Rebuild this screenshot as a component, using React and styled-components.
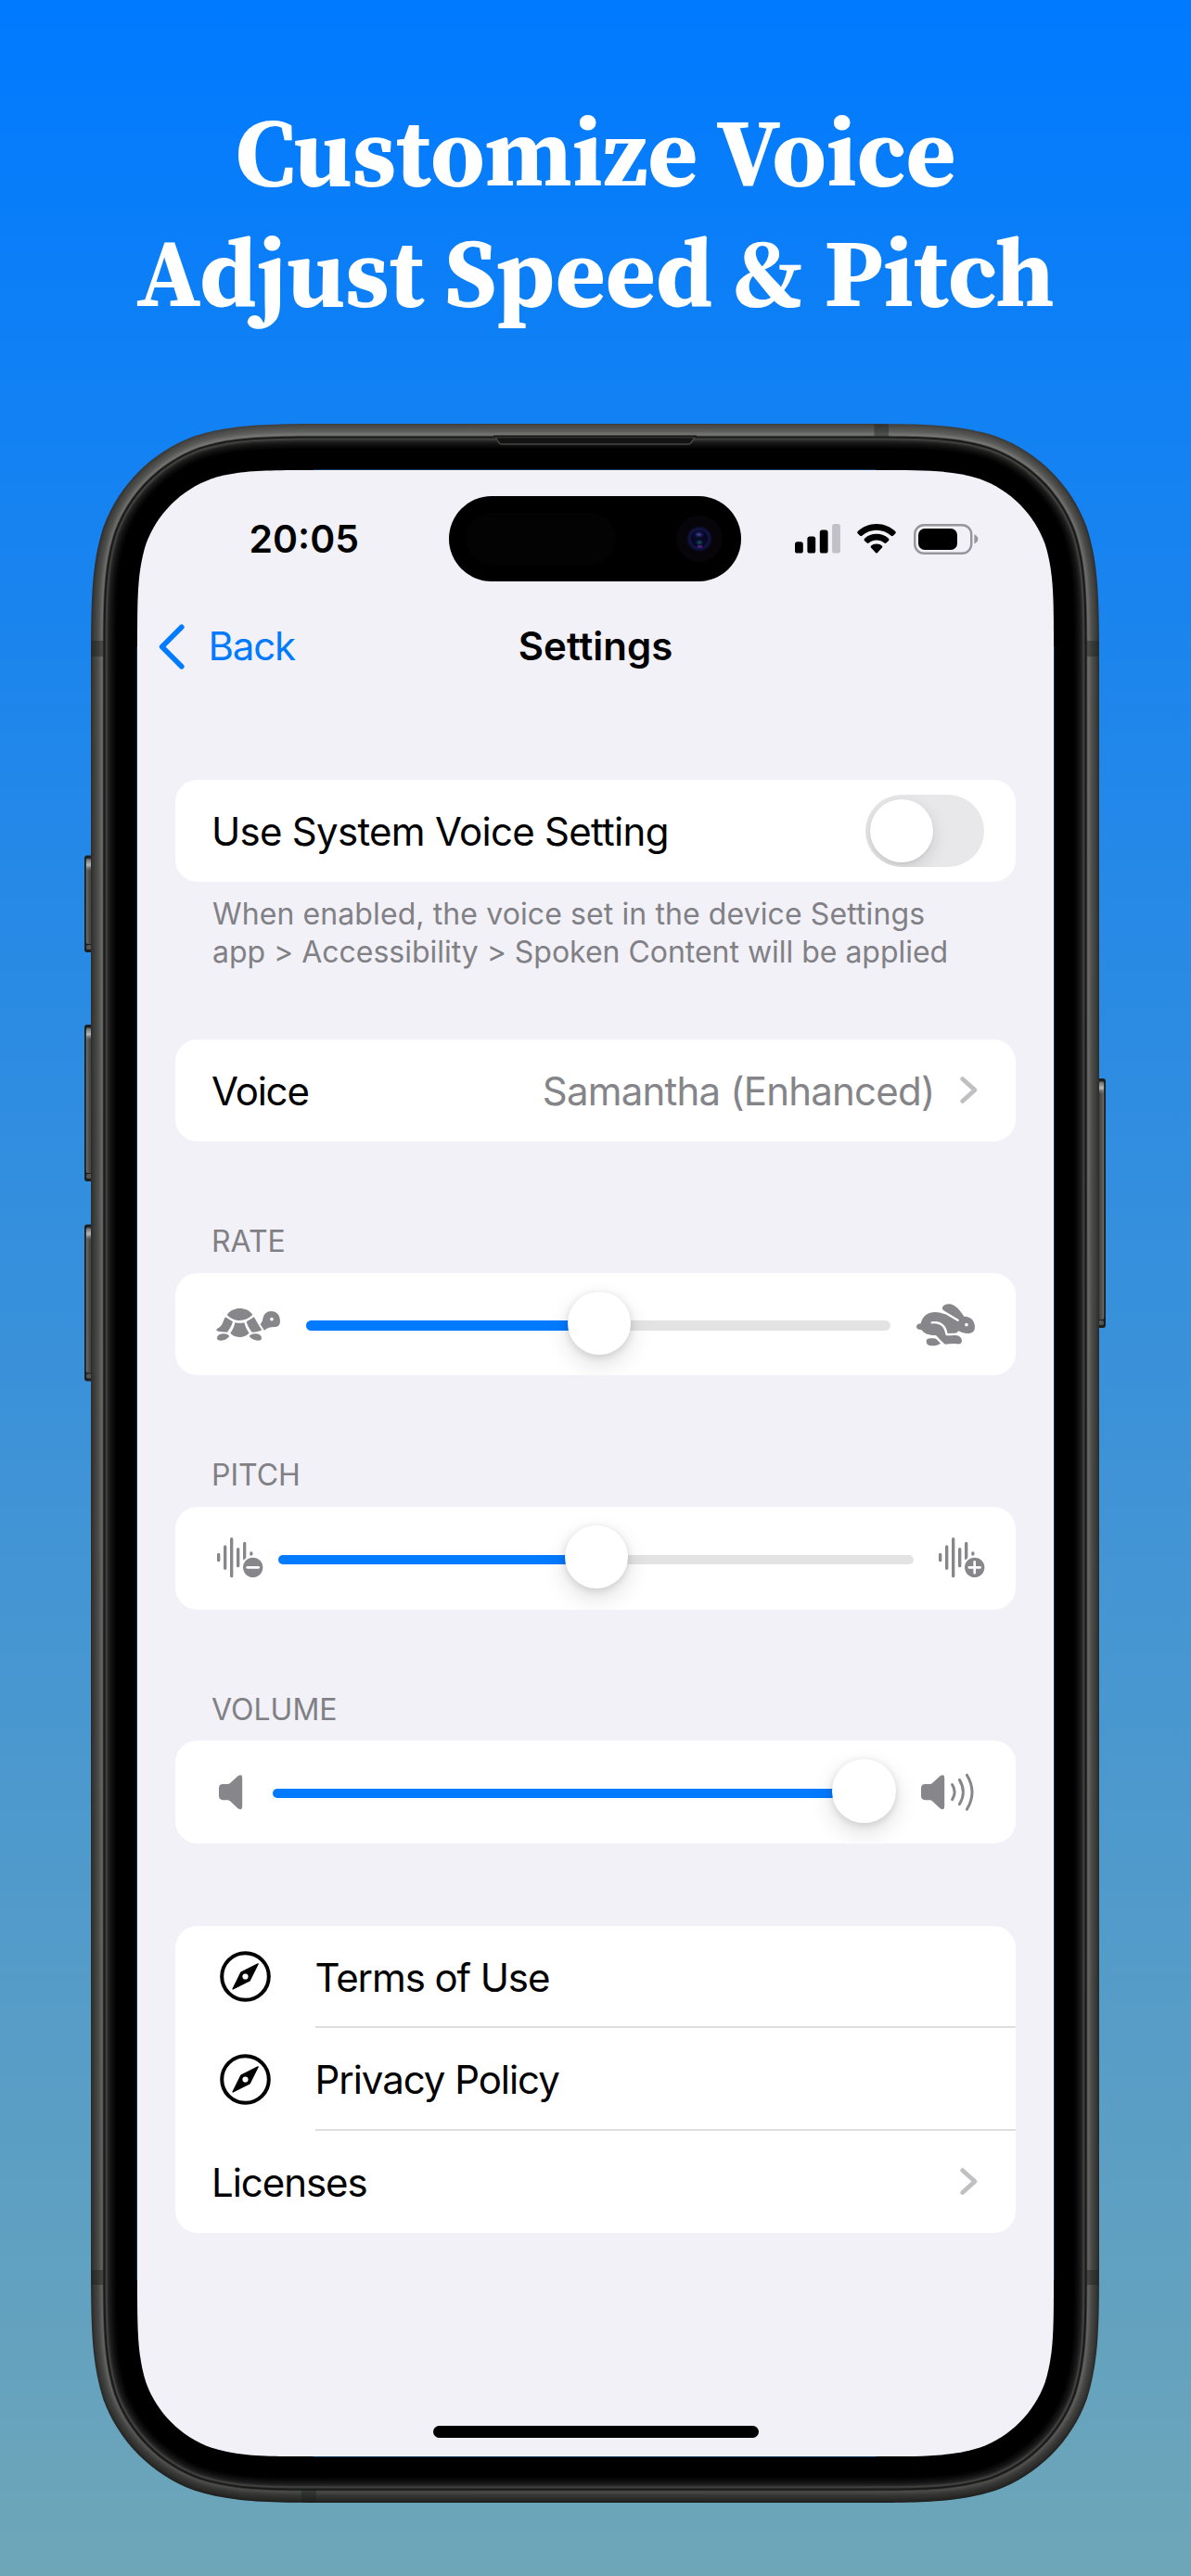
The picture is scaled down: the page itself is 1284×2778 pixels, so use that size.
import React from "react";
import styled, { createGlobalStyle, css } from "styled-components";

const PHONE = { w: 1087, h: 2242, r: 177 };
const SCREEN = { w: 988, h: 2142, r: 126 };

/* Rounded rectangle with continuous (iOS style) corners. */
function squircle(w, h, r, inset = 0) {
  const R = r - inset;
  const x0 = inset;
  const y0 = inset;
  const x1 = w - inset;
  const y1 = h - inset;
  const a = 1.52866 * R;
  const b = 1.08849 * R;
  const c = 0.86841 * R;
  const d = 0.63149 * R;
  const e = 0.07491 * R;
  const f = 0.37282 * R;
  const g = 0.16906 * R;
  return [
    `M${x0 + a} ${y0}`,
    `L${x1 - a} ${y0}`,
    `C${x1 - b} ${y0} ${x1 - c} ${y0} ${x1 - d} ${y0 + e}`,
    `C${x1 - f} ${y0 + g} ${x1 - g} ${y0 + f} ${x1 - e} ${y0 + d}`,
    `C${x1} ${y0 + c} ${x1} ${y0 + b} ${x1} ${y0 + a}`,
    `L${x1} ${y1 - a}`,
    `C${x1} ${y1 - b} ${x1} ${y1 - c} ${x1 - e} ${y1 - d}`,
    `C${x1 - g} ${y1 - f} ${x1 - f} ${y1 - g} ${x1 - d} ${y1 - e}`,
    `C${x1 - c} ${y1} ${x1 - b} ${y1} ${x1 - a} ${y1}`,
    `L${x0 + a} ${y1}`,
    `C${x0 + b} ${y1} ${x0 + c} ${y1} ${x0 + d} ${y1 - e}`,
    `C${x0 + f} ${y1 - g} ${x0 + g} ${y1 - f} ${x0 + e} ${y1 - d}`,
    `C${x0} ${y1 - c} ${x0} ${y1 - b} ${x0} ${y1 - a}`,
    `L${x0} ${y0 + a}`,
    `C${x0} ${y0 + b} ${x0} ${y0 + c} ${x0 + e} ${y0 + d}`,
    `C${x0 + g} ${y0 + f} ${x0 + f} ${y0 + g} ${x0 + d} ${y0 + e}`,
    `C${x0 + c} ${y0} ${x0 + b} ${y0} ${x0 + a} ${y0}Z`,
  ].join(" ");
}

const GlobalStyle = createGlobalStyle`
  * { box-sizing: border-box; }
  body { margin: 0; background: #6ea6b8; }
`;

const Page = styled.main`
  width: 1284px;
  height: 2778px;
  overflow: hidden;
  display: flex;
  flex-direction: column;
  align-items: center;
  background: linear-gradient(180deg, #007aff 0%, #6ea6b8 100%);
  font-family: Inter, "Liberation Sans", sans-serif;
  -webkit-font-smoothing: antialiased;
`;

const Headline = styled.h1`
  margin: 0;
  height: 457px;
  flex: none;
  padding-top: 99px;
  font-family: "Source Serif 4", "Source Serif Pro", "Liberation Serif", serif;
  font-weight: 700;
  font-size: 104px;
  line-height: 130px;
  text-align: center;
  white-space: nowrap;
  color: #fff;
`;

const Phone = styled.div`
  position: relative;
  flex: none;
  width: ${PHONE.w}px;
  height: ${PHONE.h}px;
  margin-right: 1px;
  padding: 50px 0 0 50px;
`;

const Chassis = styled.svg`
  position: absolute;
  left: -8px;
  top: 0;
`;

const Screen = styled.div`
  position: relative;
  width: ${SCREEN.w}px;
  height: ${SCREEN.h}px;
  display: flex;
  flex-direction: column;
  background: #f2f1f8;
  clip-path: path("${squircle(SCREEN.w, SCREEN.h, SCREEN.r)}");
`;

const StatusBar = styled.div`
  flex: none;
  height: 148px;
  display: grid;
  grid-template-columns: 336px 314.5px 1fr;
  align-items: center;
`;

const Clock = styled.span`
  padding-left: 120.5px;
  font-size: 41px;
  font-weight: 600;
  line-height: 50px;
  color: #000;
`;

const Island = styled.div`
  height: 92px;
  border-radius: 46px;
  background: #000;
  display: flex;
  align-items: center;
  justify-content: space-between;
  padding: 0 20px 0 18px;
`;

const IslandSensor = styled.div`
  width: 162px;
  height: 56px;
  border-radius: 28px;
  background: #030303;
`;

const StatusIcons = styled.div`
  display: flex;
  align-items: center;
  gap: 18.5px;
  padding-left: 58px;
`;

const NavBar = styled.div`
  flex: none;
  height: 85px;
  display: grid;
  grid-template-columns: 1fr auto 1fr;
  align-items: center;
  padding-bottom: 1px;
  line-height: 50px;
  font-size: 42px;
`;

const BackButton = styled.div`
  display: flex;
  align-items: center;
  gap: 25.5px;
  padding-left: 23px;
  color: #007aff;
  letter-spacing: -1.2px;
`;

const NavTitle = styled.span`
  font-weight: 600;
  color: #000;
`;

const List = styled.div`
  padding: 100.9px 40.6px 0 40.5px;
`;

const Section = styled.section`
  margin-bottom: ${(p) => p.$gap}px;
`;

const SectionHeader = styled.h2`
  margin: 0 0 13.8px;
  padding: 1px 0 0 39.5px;
  font-size: 32px;
  font-weight: 400;
  line-height: 40px;
  color: #808085;
`;

const SectionFooter = styled.p`
  margin: 15.2px 0 0;
  padding-left: 40.5px;
  font-size: 32px;
  line-height: 40.7px;
  white-space: nowrap;
  color: #808085;
`;

const FooterLine = styled.span`
  display: block;
  letter-spacing: ${(p) => p.$tracking}px;
`;

const Card = styled.div`
  border-radius: 24px;
  background: #fff;
  overflow: hidden;
`;

const Row = styled.div`
  height: 110.4px;
  display: flex;
  align-items: center;
  padding: 0 ${(p) => p.$right || 0}px 0 ${(p) => p.$left || 39.5}px;
  line-height: 50px;
`;

const DividedRow = styled.div`
  height: 110.5px;
  display: flex;
  align-items: center;
  padding-left: 48px;
`;

const DividedLabel = styled.div`
  flex: 1;
  align-self: stretch;
  display: flex;
  align-items: center;
  margin-left: 48px;
  padding-top: 2px;
  border-bottom: 2px solid #dededf;
`;

const Label = styled.span`
  padding-top: 2px;
  font-size: 42px;
  line-height: 50px;
  white-space: nowrap;
  color: ${(p) => p.$color || "#000"};
  letter-spacing: ${(p) => p.$tracking}px;
  ${(p) =>
    p.$push &&
    css`
      margin-left: auto;
      margin-right: 28px;
    `}
`;

const Disclosure = styled.span`
  margin-left: auto;
`;

const Switch = styled.div`
  width: 128px;
  height: 78px;
  margin-left: auto;
  padding: 5px;
  border-radius: 39px;
  background: #e8e8ea;
  overflow: hidden;
`;

const SwitchKnob = styled.div`
  width: 68px;
  height: 68px;
  border-radius: 50%;
  background: #fff;
  box-shadow: 0 6px 18px rgba(0, 0, 0, 0.13), 0 2px 3px rgba(0, 0, 0, 0.05);
`;

const Track = styled.div`
  position: relative;
  flex: 1;
  height: 10.6px;
  margin: 3px ${(p) => p.$after}px 0 ${(p) => p.$before}px;
  border-radius: 6px;
  background: #e3e3e4;
`;

const TrackFill = styled.div`
  height: 100%;
  border-radius: 6px;
  background: #007aff;
`;

const Thumb = styled.div`
  position: absolute;
  top: -31.6px;
  width: 68.4px;
  height: 68.4px;
  margin-left: -34.2px;
  border-radius: 50%;
  background: #fff;
  box-shadow: 0 10px 26px rgba(0, 0, 0, 0.13), 0 2px 9px rgba(0, 0, 0, 0.13);
`;

const HomeIndicator = styled.div`
  width: 351px;
  height: 13px;
  margin: auto auto 20px;
  border-radius: 7px;
  background: #000;
`;

const Icon = styled.svg`
  display: block;
  flex: none;
  overflow: visible;
`;

const BAND = [
  "#2f2f2e", "#353534", "#3a3b39", "#3f403e", "#434442", "#474846", "#4b4c4a",
  "#50514f", "#575856", "#5f605e", "#686967", "#6e6f6d", "#4e4f4d",
];
const RIM = [
  "#191a19", "#1b1c1b", "#3c3d3b", "#424341", "#2a2a2a", "#232323", "#1b1b1b",
  "#161616", "#121212", "#0e0e0e", "#0a0a0a", "#070707", "#040404", "#000",
];

function SideButton({ x, y, h, flip }) {
  return (
    <g transform={flip ? `translate(${x + 9} ${y}) scale(-1 1)` : `translate(${x} ${y})`}>
      <rect width="12" height={h} rx="3" fill="#1d1e1e" />
      <rect x="1.8" y="3" width="9" height={h - 12} rx="2" fill="url(#button)" />
      <rect x="2" y="4" width="6" height="13" rx="3" fill="url(#shine)" />
      <rect x="2" y={h - 8} width="6" height="5" rx="2" fill="#545555" />
    </g>
  );
}

function PhoneChassis() {
  const { w, h, r } = PHONE;
  return (
    <Chassis width={w + 16} height={h} viewBox={`-8 0 ${w + 16} ${h}`}>
      <defs>
        <linearGradient id="shade" x1="0" y1="0" x2="0" y2="1">
          <stop offset="0" stopColor="#fff" stopOpacity="0.08" />
          <stop offset="0.08" stopColor="#000" stopOpacity="0" />
          <stop offset="0.94" stopColor="#000" stopOpacity="0.1" />
          <stop offset="1" stopColor="#000" stopOpacity="0.34" />
        </linearGradient>
        <linearGradient id="button" x1="0" y1="0" x2="1" y2="0">
          <stop offset="0" stopColor="#6c6e6d" />
          <stop offset="0.35" stopColor="#4c4d4c" />
          <stop offset="1" stopColor="#2e2f2e" />
        </linearGradient>
        <linearGradient id="shine" x1="0" y1="0" x2="0" y2="1">
          <stop offset="0" stopColor="#6d7174" />
          <stop offset="0.5" stopColor="#b3b8bc" />
          <stop offset="1" stopColor="#666" stopOpacity="0" />
        </linearGradient>
      </defs>
      <SideButton x={-7} y={465.5} h={104.5} />
      <SideButton x={-7} y={648} h={169} />
      <SideButton x={-7} y={863.5} h={169} />
      <SideButton x={w - 2} y={706} h={269} flip />
      {BAND.map((color, i) => (
        <path key={color + i} d={squircle(w, h, r, i * 1.05)} fill={color} />
      ))}
      <path d={squircle(w, h, r)} fill="url(#shade)" />
      <g fill="#1d1e1d" fillOpacity="0.42">
        <rect x="844.5" y="0.5" width="15.5" height="13" />
        <rect x="227" y={h - 14} width="16" height="13.5" />
        <rect x="0.5" y="234" width="13" height="17" />
        <rect x={w - 13.5} y="234" width="13" height="17" />
        <rect x="0.5" y="1991" width="13" height="16" />
        <rect x={w - 13.5} y="1991" width="13" height="16" />
      </g>
      {RIM.map((color, i) => (
        <path
          key={color + i}
          d={squircle(w, h, r, 13.4 + i * 1.05)}
          fill={color}
        />
      ))}
      <path d="M436 14.5 L440 20.5 Q441 22 443 22 H644 Q646 22 647 20.5 L651 14.5Z" fill="#121312" stroke="#454644" strokeWidth="1.4" />
      <path d="M434 13.6 H653" stroke="#191a19" strokeWidth="2" />
      <path
        d={`M240 49.5 H${w - 240} M49.5 240 V${h - 240} M${w - 48.5} 240 V${h - 240} M240 ${h - 49.5} H${w - 240}`}
        stroke="#1462b4"
        strokeOpacity="0.5"
        fill="none"
      />
    </Chassis>
  );
}

const CameraIcon = () => (
  <Icon width="50" height="50" viewBox="-25 -25 50 50">
    <defs>
      <radialGradient id="lens">
        <stop offset="0" stopColor="#1a1d5c" />
        <stop offset="0.55" stopColor="#0b0d33" />
        <stop offset="0.8" stopColor="#101544" />
        <stop offset="1" stopColor="#090a1c" />
      </radialGradient>
      <radialGradient id="glintTop">
        <stop offset="0" stopColor="#4a4fa8" />
        <stop offset="1" stopColor="#1a1d5c" stopOpacity="0" />
      </radialGradient>
      <radialGradient id="glintBottom">
        <stop offset="0" stopColor="#10616b" />
        <stop offset="1" stopColor="#0d2a48" stopOpacity="0" />
      </radialGradient>
    </defs>
    <circle r="25" fill="#07040a" />
    <circle r="13.5" fill="url(#lens)" />
    <circle r="9" fill="#070824" />
    <ellipse cx="-0.5" cy="-4.5" rx="6" ry="4" fill="url(#glintTop)" />
    <ellipse cx="0" cy="4" rx="5" ry="4" fill="url(#glintBottom)" />
    <ellipse cx="0.5" cy="8.5" rx="3" ry="1.4" fill="#4c1d7a" />
  </Icon>
);

const SignalIcon = () => (
  <Icon width="49" height="32" viewBox="0 0 49 32">
    <rect x="0" y="19.3" width="8.8" height="12.2" rx="2.6" />
    <rect x="13.4" y="13.4" width="8.8" height="18.1" rx="2.6" />
    <rect x="26.8" y="6.4" width="8.8" height="25.1" rx="2.6" />
    <rect x="40.1" y="0" width="8.8" height="31.5" rx="2.6" fill="#c1c0c6" />
  </Icon>
);

const WifiIcon = () => (
  <Icon width="42" height="32" viewBox="0 0 42 32">
    <path d="M21 0 C29 0 36 3 41.3 8 Q42.3 9.2 41.4 10.3 L38.8 12.8 Q37.8 13.6 36.7 12.7 C32.4 8.8 27 6.7 21 6.7 C15 6.7 9.6 8.8 5.3 12.7 Q4.2 13.6 3.2 12.8 L0.6 10.3 Q-0.3 9.2 0.7 8 C6 3 13 0 21 0Z" />
    <path d="M21 10.8 C26 10.8 30.5 12.6 34 15.8 Q35 17 34.1 18 L31.4 20.6 Q30.4 21.5 29.3 20.6 C27 18.6 24.2 17.5 21 17.5 C17.8 17.5 15 18.6 12.7 20.6 Q11.6 21.5 10.6 20.6 L7.9 18 Q7 17 8 15.8 C11.5 12.6 16 10.8 21 10.8Z" />
    <path d="M21 21.5 C23.6 21.5 25.4 22.3 27 23.7 Q27.8 24.6 27 25.6 L22 30.9 Q21 31.9 20 30.9 L15 25.6 Q14.2 24.6 15 23.7 C16.6 22.3 18.4 21.5 21 21.5Z" />
  </Icon>
);

const BatteryIcon = () => (
  <Icon width="69" height="33" viewBox="0 0 69 33">
    <rect x="1.2" y="1.2" width="61" height="30.6" rx="10" fill="none" stroke="#97969b" strokeWidth="2.4" />
    <rect x="5" y="5" width="42" height="23" rx="7" />
    <path d="M65.4 11.2 Q69.4 13 69.4 16.3 Q69.4 19.6 65.4 21.4Z" fill="#97969b" />
  </Icon>
);

const BackIcon = () => (
  <Icon width="28" height="49" viewBox="0 0 28 49">
    <path d="M24.8 3.2 L3.6 24.5 L24.8 45.8" fill="none" stroke="currentColor" strokeWidth="5.6" strokeLinecap="round" strokeLinejoin="round" />
  </Icon>
);

const Chevron = () => (
  <Icon width="19" height="29" viewBox="0 0 19 29">
    <path d="M2.6 2.5 L16 14.5 L2.6 26.5" fill="none" stroke="#c0c0c2" strokeWidth="4.8" strokeLinecap="round" strokeLinejoin="round" />
  </Icon>
);

const TurtleIcon = () => (
  <Icon width="69.3" height="35" viewBox="160 333 208 105" fill="#87878b">
    <path d="M195 354 C205 339 220 333 236 333 C253 333 268 339 278 354 C266 366 251 372 236 372 C221 372 206 366 195 354Z" />
    <path d="M190 361 L214 376 C210 389 204 400 196 410 C185 410 173 409 163 406 C160 404 161 400 164 398 C172 393 175 391 178 386 C183 377 185 369 190 361Z" />
    <path d="M283 361 C290 375 299 389 308 403 C300 407 289 410 276 410 C268 400 262 389 258 376Z" />
    <path d="M221 379 Q236 382 251 379 C254 391 260 403 267 413 C250 430 222 430 206 413 C213 403 219 391 221 379Z" />
    <path d="M303 385 C307 379 310 375 311 367 C314 351 324 342 338 342 C356 342 367 355 367 374 C367 388 359 393 348 393 C336 393 325 396 316 404Z" />
    <circle cx="340" cy="368" r="5.5" fill="#fff" />
    <path d="M163 430 C163 418 175 415 186 415 C194 415 200 419 203 423 C196 432 187 437 176 437 C168 437 163 435 163 430Z" />
    <path d="M307 430 C307 418 296 415 286 415 C277 415 270 419 267 423 C274 432 285 437 295 437 C302 437 307 436 307 430Z" />
  </Icon>
);

const RabbitIcon = () => (
  <Icon width="63.3" height="45.3" viewBox="922 316 190 136" fill="#87878b">
    <path d="M936 380 C941 355 960 343 982 343 C993 343 1004 346 1014 350 L1018 344 C1008 338 1004 333 1007 326 C1012 317 1024 315 1036 318 C1052 323 1065 340 1076 357 C1098 356 1111 372 1111 391 C1111 405 1103 412 1088 412 C1075 412 1066 408 1058 404 L1050 412 L1024 412 L1026 419 L1048 418 C1062 419 1069 426 1069 436 C1069 445 1062 447 1052 446 C1040 444 1028 447 1015 447 C1005 440 997 430 985 418 C962 419 946 412 938 400 C928 401 922 396 922 390 C922 384 928 380 936 380Z" />
    <path d="M1008 341 L1056 369" stroke="#fff" strokeWidth="7" strokeLinecap="round" />
    <path d="M972 377 C1000 374 1016 388 1020 415.5 L1060 414" fill="none" stroke="#fff" strokeWidth="7" strokeLinecap="round" strokeLinejoin="round" />
    <circle cx="1084" cy="384" r="5.5" fill="#fff" />
    <path d="M954 438 C954 430 960 428 970 428 C980 428 986 429 990 434 L1000 444 C992 450 984 452 974 452 C962 452 954 447 954 438Z" />
  </Icon>
);

const WaveformIcon = ({ plus }) => (
  <Icon width="49.4" height="43.7" viewBox="160 1073 148 131" fill="none" strokeLinecap="round">
    <path
      d="M165 1128 V1147 M186 1103 V1173 M207 1078 V1198 M228 1111 V1165 M249 1092 V1142 M270.5 1124 V1127"
      stroke="#87878b"
      strokeWidth="10"
    />
    <circle cx="276" cy="1170" r="38" fill="#fff" />
    <circle cx="276" cy="1170" r="32" fill="#87878b" />
    <path d={plus ? "M258 1170 H294 M276 1152 V1188" : "M258 1170 H294"} stroke="#fff" strokeWidth="8" />
  </Icon>
);

const SPEAKER = "M4.5 10 H9.5 Q11 10 12 9 L20.5 1.3 Q25.2 -1.8 25.2 3.5 V33.8 Q25.2 39 20.5 36.2 L12 28.2 Q11 27.2 9.5 27.2 H4.5 Q0 27.2 0 22.8 V14.4 Q0 10 4.5 10Z";

const SpeakerIcon = () => (
  <Icon width="25.2" height="37.4" viewBox="0 0 25.2 37.4" fill="#87878b">
    <path d={SPEAKER} />
  </Icon>
);

const SpeakerLoudIcon = () => (
  <Icon width="57" height="37.4" viewBox="0 0 57 37.4" fill="#87878b">
    <path d={SPEAKER} />
    <path
      d="M33.6 10.6 Q38.6 18.6 33.6 26.6 M41.4 5.4 Q49.4 18.6 41.4 31.8 M49.4 0.2 Q60.6 18.6 49.4 37.2"
      fill="none"
      stroke="#87878b"
      strokeWidth="3"
      strokeLinecap="round"
    />
  </Icon>
);

const CompassIcon = () => (
  <Icon width="55" height="55" viewBox="-27.5 -27.5 55 55">
    <circle r="25.3" fill="none" stroke="#000" strokeWidth="4" />
    <path d="M13.6 -13.6 L4.6 4.4 L-13.4 13.4 L-4.6 -4.4Z" stroke="#000" strokeWidth="1.4" strokeLinejoin="round" />
    <circle r="3.1" fill="#fff" />
  </Icon>
);

function SliderSection({ title, gap, left, right, before, after, value, minIcon, maxIcon }) {
  return (
    <Section $gap={gap}>
      <SectionHeader>{title}</SectionHeader>
      <Card>
        <Row $left={left} $right={right}>
          {minIcon}
          <Track $before={before} $after={after}>
            <TrackFill style={{ width: `${value}%` }} />
            <Thumb style={{ left: `${value}%` }} />
          </Track>
          {maxIcon}
        </Row>
      </Card>
    </Section>
  );
}

export default function App() {
  return (
    <>
      <GlobalStyle />
      <Page>
        <Headline>
          Customize Voice
          <br />
          Adjust Speed &amp; Pitch
        </Headline>
        <Phone>
          <PhoneChassis />
          <Screen>
            <StatusBar>
              <Clock>20:05</Clock>
              <Island>
                <IslandSensor />
                <CameraIcon />
              </Island>
              <StatusIcons>
                <SignalIcon />
                <WifiIcon />
                <BatteryIcon />
              </StatusIcons>
            </StatusBar>
            <NavBar>
              <BackButton>
                <BackIcon />
                Back
              </BackButton>
              <NavTitle>Settings</NavTitle>
            </NavBar>
            <List>
              <Section $gap={72.8}>
                <Card>
                  <Row $right={34.5}>
                    <Label $tracking={-0.72}>Use System Voice Setting</Label>
                    <Switch>
                      <SwitchKnob />
                    </Switch>
                  </Row>
                </Card>
                <SectionFooter>
                  <FooterLine $tracking={0.1}>
                    When enabled, the voice set in the device Settings
                  </FooterLine>
                  <FooterLine $tracking={-0.02}>
                    app &gt; Accessibility &gt; Spoken Content will be applied
                  </FooterLine>
                </SectionFooter>
              </Section>
              <Section $gap={87.1}>
                <Card>
                  <Row $right={41}>
                    <Label $tracking={-1.2}>Voice</Label>
                    <Label $tracking={-0.8} $color="#858589" $push>
                      Samantha (Enhanced)
                    </Label>
                    <Chevron />
                  </Row>
                </Card>
              </Section>
              <SliderSection
                title="RATE"
                gap={87}
                left={44.9}
                right={44.4}
                before={27.8}
                after={27.4}
                value={50.1}
                minIcon={<TurtleIcon />}
                maxIcon={<RabbitIcon />}
              />
              <SliderSection
                title="PITCH"
                gap={87}
                left={45.1}
                right={34}
                before={17}
                after={27.5}
                value={50.1}
                minIcon={<WaveformIcon />}
                maxIcon={<WaveformIcon plus />}
              />
              <SliderSection
                title="VOLUME"
                gap={89}
                left={47}
                right={45.6}
                before={33.4}
                after={26.9}
                value={94.9}
                minIcon={<SpeakerIcon />}
                maxIcon={<SpeakerLoudIcon />}
              />
              <Card>
                <DividedRow>
                  <CompassIcon />
                  <DividedLabel>
                    <Label $tracking={-1.1}>Terms of Use</Label>
                  </DividedLabel>
                </DividedRow>
                <DividedRow>
                  <CompassIcon />
                  <DividedLabel>
                    <Label $tracking={-1.05}>Privacy Policy</Label>
                  </DividedLabel>
                </DividedRow>
                <Row $right={41}>
                  <Label $tracking={-1.05}>Licenses</Label>
                  <Disclosure>
                    <Chevron />
                  </Disclosure>
                </Row>
              </Card>
            </List>
            <HomeIndicator />
          </Screen>
        </Phone>
      </Page>
    </>
  );
}
